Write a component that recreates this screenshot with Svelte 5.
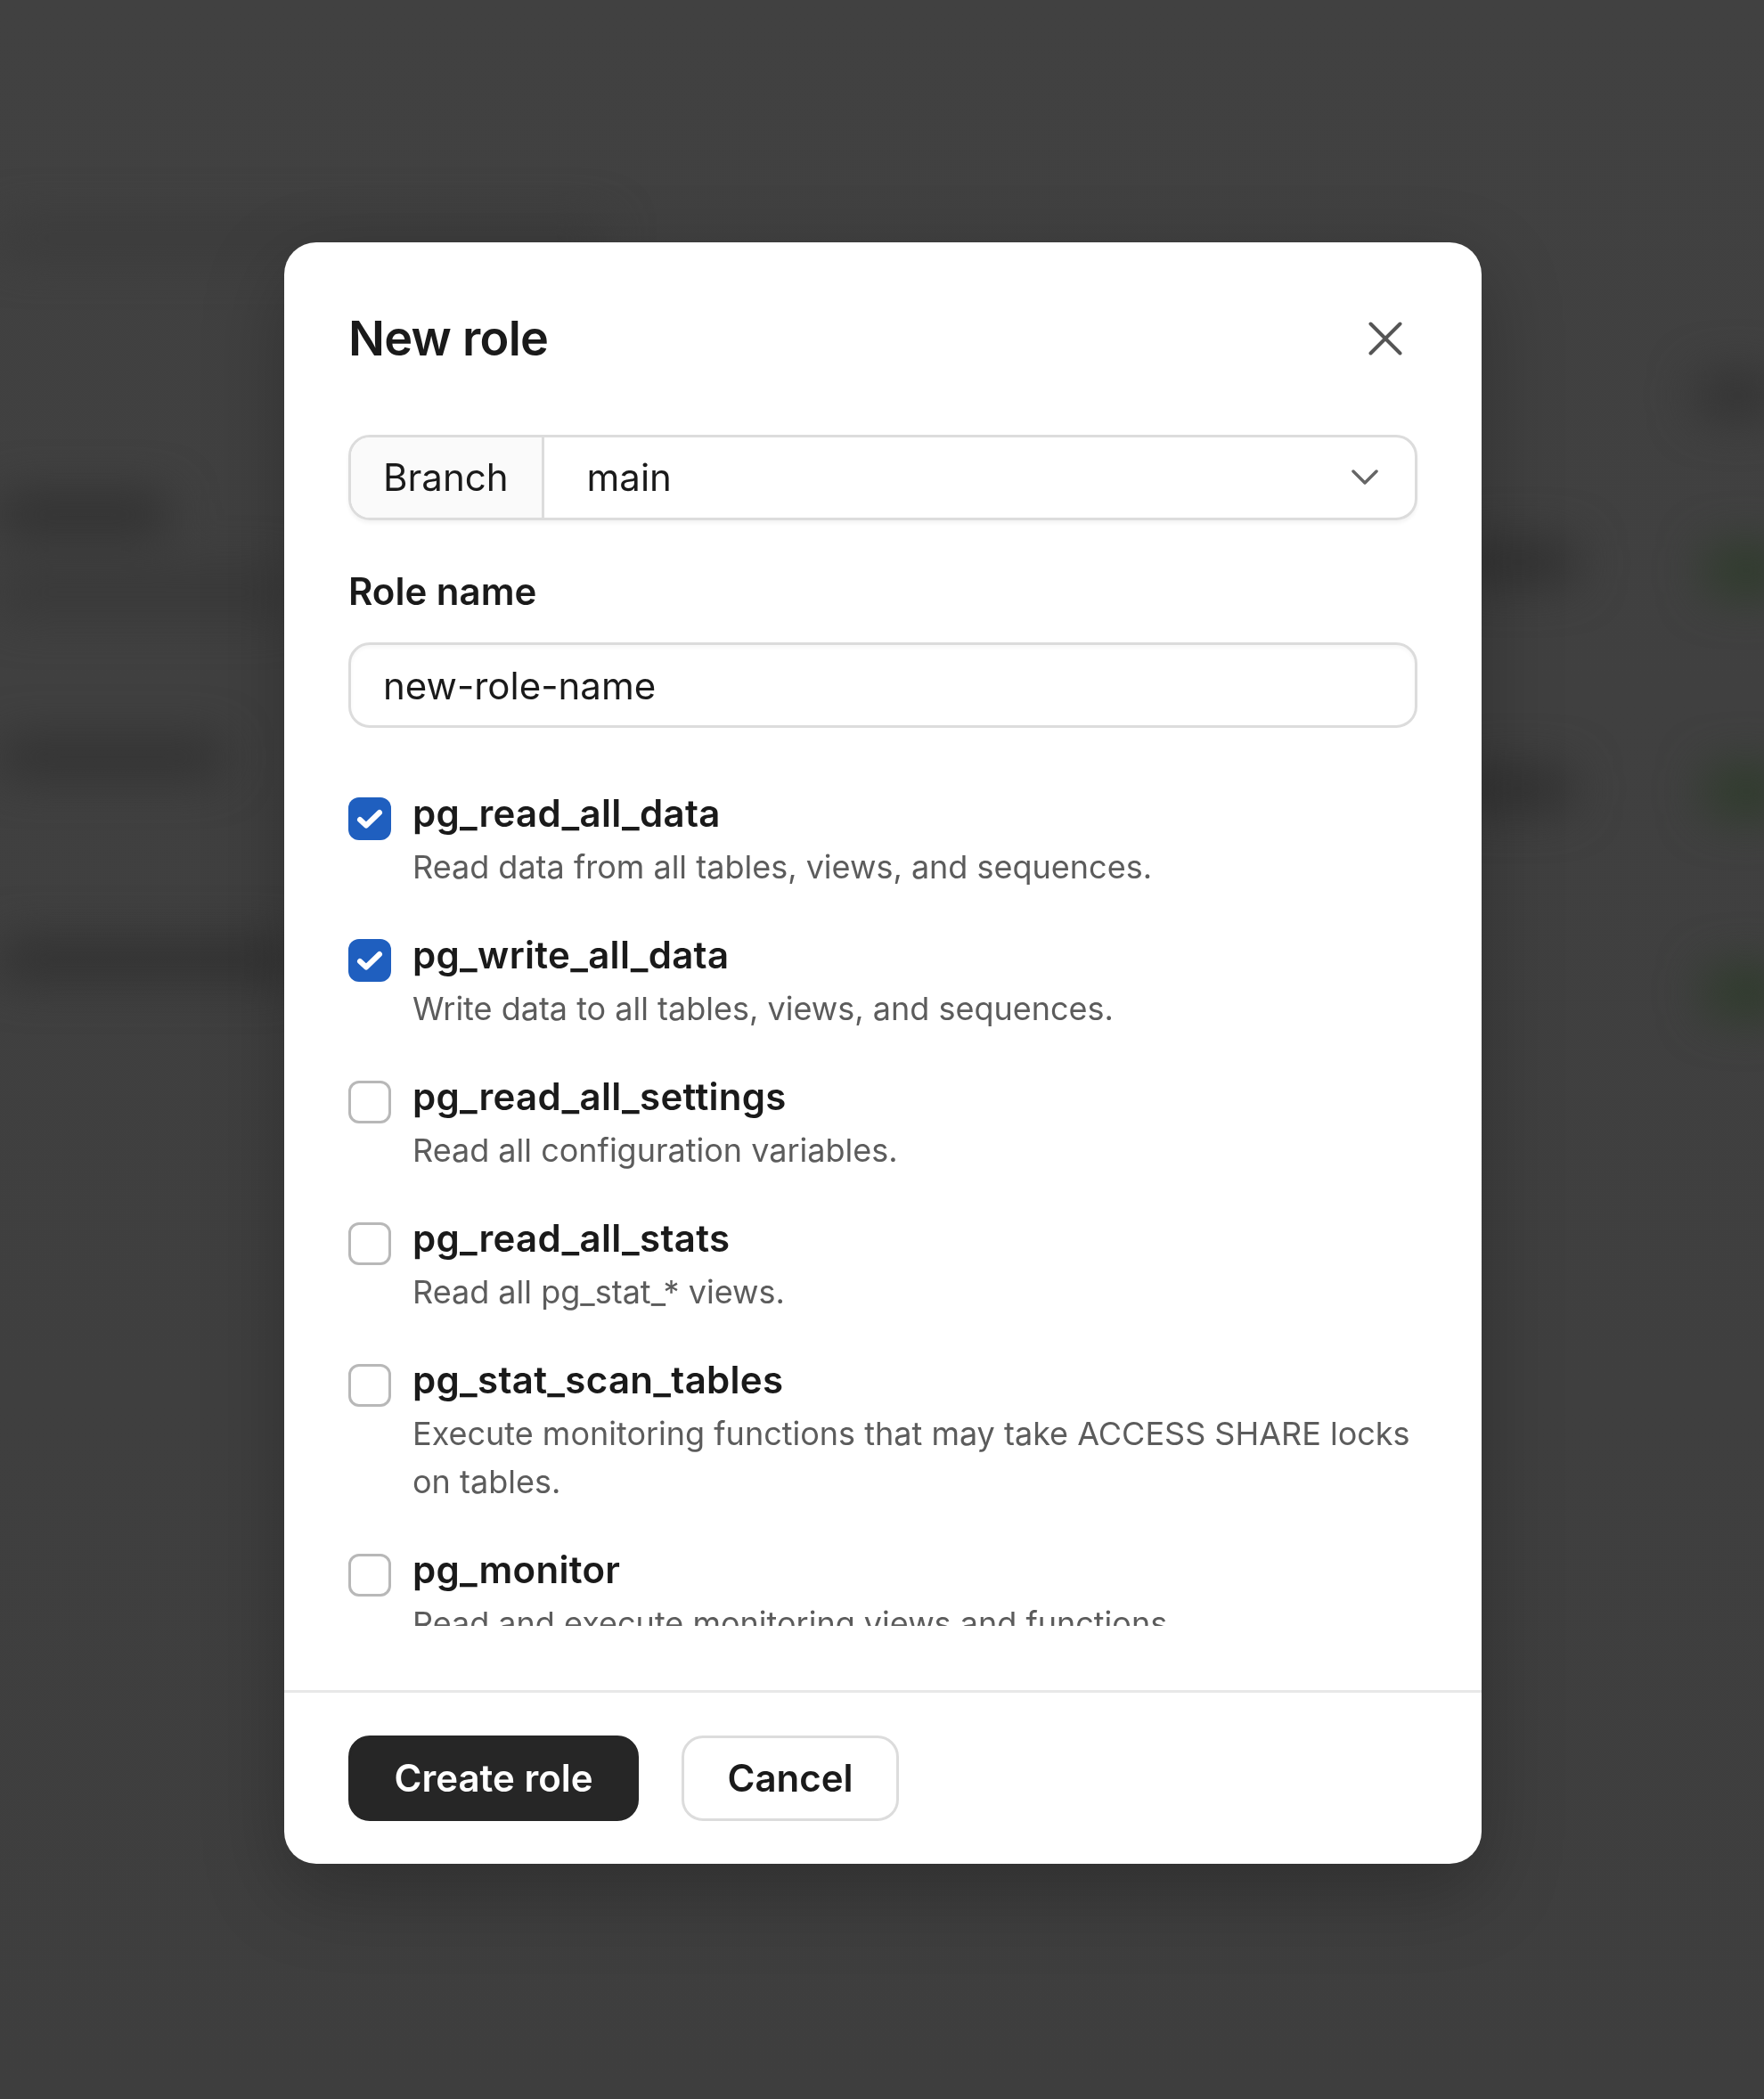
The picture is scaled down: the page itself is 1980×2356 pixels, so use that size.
<script>
    const roles = [
        { name: "pg_read_all_data", desc: "Read data from all tables, views, and sequences.", on: true },
        { name: "pg_write_all_data", desc: "Write data to all tables, views, and sequences.", on: true },
        { name: "pg_read_all_settings", desc: "Read all configuration variables.", on: false },
        { name: "pg_read_all_stats", desc: "Read all pg_stat_* views.", on: false },
        { name: "pg_stat_scan_tables", desc: "Execute monitoring functions that may take ACCESS SHARE locks on tables.", on: false },
        { name: "pg_monitor", desc: "Read and execute monitoring views and functions.", on: false }
    ]
</script>

<div class="overlay">
    <div class="blurs" aria-hidden="true">
        <span class="blur b1"></span>
        <span class="blur b2"></span>
        <span class="blur b3"></span>
        <span class="blur b4"></span>
        <span class="blur b5"></span>
        <span class="blur b6"></span>
        <span class="blur b7"></span>
        <span class="blur b8"></span>
        <span class="blur b9"></span>
        <span class="blur b10"></span>
        <span class="blur b11"></span>
    </div>

    <div class="dialog">
        <div class="body">
            <header>
                <h2>New role</h2>
                <button class="close" aria-label="Close">
                    <svg width="38" height="38" viewBox="0 0 38 38" fill="none" stroke="#555" stroke-width="4" stroke-linecap="round"><path d="M2.5 2.5l33 33M35.5 2.5l-33 33"/></svg>
                </button>
            </header>

            <div class="branch">
                <span class="addon">Branch</span>
                <div class="select">
                    <span>main</span>
                    <svg width="30" height="17" viewBox="0 0 30 17" fill="none" stroke="#666" stroke-width="3.5" stroke-linecap="round" stroke-linejoin="round"><path d="M2 2l13 13L28 2"/></svg>
                </div>
            </div>

            <label class="label" for="role">Role name</label>
            <input id="role" class="text" value="new-role-name" />

            <div class="list">
                {#each roles as role}
                    <div class="role">
                        <span class="box" class:on={role.on}>
                            {#if role.on}
                                <svg width="48" height="48" viewBox="0 0 48 48" fill="none" stroke="#fff" stroke-width="6" stroke-linecap="round" stroke-linejoin="round"><path d="M13 25l7 6.5L35 17"/></svg>
                            {/if}
                        </span>
                        <div class="info">
                            <div class="name">{role.name}</div>
                            <div class="desc">{role.desc}</div>
                        </div>
                    </div>
                {/each}
            </div>
        </div>

        <footer>
            <button class="btn primary">Create role</button>
            <button class="btn">Cancel</button>
        </footer>
    </div>
</div>

<style>
    :global(body) {
        margin: 0;
        background: #404040;
        font-family: Inter, "Liberation Sans", sans-serif;
    }

    .overlay {
        position: relative;
        height: 2356px;
        box-sizing: border-box;
        padding-top: 272px;
        overflow: hidden;
        background: linear-gradient(#414141, #3e3e3e);
    }

    .blurs {
        position: absolute;
        inset: 0;
        filter: blur(26px);
    }
    .blur {
        position: absolute;
        background: #303030;
        border-radius: 12px;
    }
    .b1 { left: 0; top: 555px; width: 190px; height: 44px; }
    .b2 { left: 0; top: 830px; width: 250px; height: 40px; }
    .b3 { left: 0; top: 1055px; width: 330px; height: 44px; }
    .b4 { left: 1640px; top: 608px; width: 130px; height: 46px; }
    .b5 { left: 1640px; top: 862px; width: 125px; height: 46px; }
    .b6 { left: 1905px; top: 420px; width: 90px; height: 48px; background: #323232; }
    .b7 { left: 1915px; top: 612px; width: 90px; height: 56px; background: #2e3b2b; }
    .b8 { left: 1915px; top: 860px; width: 90px; height: 56px; background: #2e3b2b; }
    .b9 { left: 1915px; top: 1085px; width: 90px; height: 56px; background: #2e3b2b; }
    .b10 { left: 0; top: 640px; width: 330px; height: 50px; background: #383838; }
    .b11 { left: 0; top: 250px; width: 680px; height: 36px; background: #3a3a3a; }

    .dialog {
        position: relative;
        width: 1344px;
        height: 1820px;
        margin-left: 319px;
        background: #fff;
        border-radius: 36px;
        box-shadow: 0 30px 90px rgba(0, 0, 0, 0.25);
        display: flex;
        flex-direction: column;
        overflow: hidden;
    }

    .body {
        flex: 1;
        min-height: 0;
        padding: 72px;
        display: flex;
        flex-direction: column;
    }

    header {
        height: 72px;
        display: flex;
        align-items: center;
        justify-content: space-between;
        margin-bottom: 72px;
    }

    h2 {
        margin: 0;
        padding-bottom: 1px;
        font-size: 54px;
        font-weight: 600;
        color: #1a1a1a;
        letter-spacing: -0.75px;
    }

    .close {
        padding: 0;
        border: 0;
        background: none;
        display: flex;
        margin-right: 17px;
    }

    .branch {
        height: 96px;
        box-sizing: border-box;
        flex: none;
        display: flex;
        border: 3px solid #dcdcdc;
        border-radius: 24px;
        box-shadow: 0 3px 4px rgba(0, 0, 0, 0.05);
        font-size: 42px;
        color: #1a1a1a;
        overflow: hidden;
    }

    .addon {
        display: flex;
        align-items: center;
        padding: 0 37px 1px 36px;
        background: #fafafa;
        border-right: 3px solid #dcdcdc;
    }

    .select {
        flex: 1;
        display: flex;
        align-items: center;
        justify-content: space-between;
        padding: 0 41px 1px 48px;
    }

    .label {
        margin-top: 50px;
        margin-bottom: 27px;
        font-size: 42px;
        line-height: 60px;
        font-weight: 600;
        color: #1a1a1a;
    }

    .text {
        flex: none;
        height: 96px;
        box-sizing: border-box;
        border: 3px solid #dcdcdc;
        border-radius: 24px;
        padding: 0 36px;
        font: inherit;
        font-size: 42px;
        color: #1a1a1a;
        outline: none;
        box-shadow: inset 0 3px 4px rgba(0, 0, 0, 0.03);
    }

    .list {
        flex: 1;
        min-height: 0;
        margin-top: 64px;
        overflow: hidden;
        display: flex;
        flex-direction: column;
        gap: 40px;
    }

    .role {
        flex: none;
        display: flex;
        gap: 24px;
    }

    .box {
        flex: none;
        width: 48px;
        height: 48px;
        margin-top: 14px;
        box-sizing: border-box;
        border: 3px solid #b8b8b8;
        border-radius: 12px;
        background: #fff;
    }
    .box.on {
        border: 0;
        background: #1f5fbf;
    }
    .box svg {
        display: block;
    }

    .name {
        padding-top: 2px;
        font-size: 42px;
        line-height: 60px;
        font-weight: 600;
        letter-spacing: 0.3px;
        color: #1a1a1a;
    }

    .desc {
        margin-top: 3px;
        font-size: 36px;
        line-height: 54px;
        color: #5c5c5c;
    }

    footer {
        flex: none;
        border-top: 3px solid #e8e8e8;
        padding: 48px 72px;
        display: flex;
        gap: 48px;
    }

    .btn {
        height: 96px;
        box-sizing: border-box;
        padding: 0 48.5px 2px;
        border: 3px solid #dcdcdc;
        border-radius: 24px;
        background: #fff;
        color: #1a1a1a;
        font: inherit;
        font-size: 42px;
        font-weight: 600;
    }
    .btn.primary {
        border-color: #262626;
        background: #262626;
        color: #fff;
    }
</style>
